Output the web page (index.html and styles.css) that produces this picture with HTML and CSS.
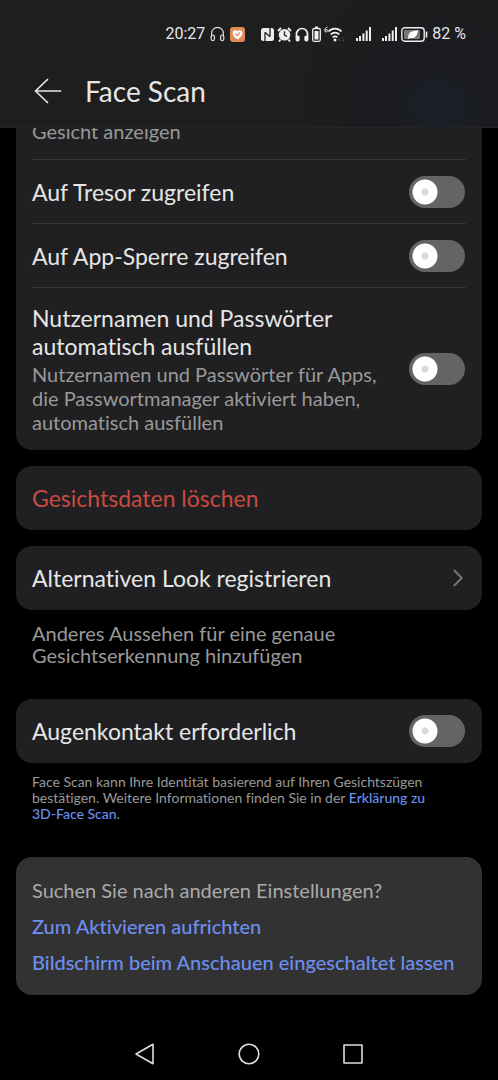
FILE: index.html
```html
<!DOCTYPE html>
<html lang="de">
<head>
<meta charset="utf-8">
<meta name="viewport" content="width=device-width, initial-scale=1">
<title>Face Scan</title>
<link rel="stylesheet" href="styles.css">
</head>
<body>
<header class="top">
  <div class="status">
    <div class="status-group status-left">
      <span class="clock">20:27</span>
      <svg width="15" height="16" viewBox="0 0 15 16" fill="none" stroke="#dcdcdc" stroke-width="1.2"><path d="M1.6 11V7.3a5.9 5.9 0 0 1 11.8 0V11"/><rect x="1.2" y="9" width="3.2" height="5.6" rx="1.5"/><rect x="10.6" y="9" width="3.2" height="5.6" rx="1.5"/></svg>
      <svg width="15" height="15" viewBox="0 0 15 15"><rect width="15" height="15" rx="3" fill="#e08a58"/><path d="M7.5 12.6C4.5 10.4 2.6 8.7 2.6 6.1 2.6 3.2 6 2.3 7.5 4.6 9 2.3 12.4 3.2 12.4 6.1 12.4 8.7 10.5 10.4 7.5 12.6z" fill="#fff"/><path d="M5.2 6.800l2 1.900 3-3.300" fill="none" stroke="#e08a58" stroke-width="1.200"/></svg>
    </div>
    <div class="status-group">
      <svg width="13" height="13" viewBox="0 0 13 13"><rect width="13" height="13" rx="2.500" fill="#eee"/><path d="M4 13V4.500M9 0v8.500" stroke="#1e1e1f" stroke-width="1.300"/><path d="M4 4.300L9 8.700" stroke="#1e1e1f" stroke-width="1.300"/></svg>
      <svg width="15" height="15" viewBox="0 0 15 15"><circle cx="7.500" cy="7.800" r="5.800" fill="#eee"/><path d="M1 4l3-3M14 4l-3-3M3.500 12.500L2 14.500M11.500 12.500l1.500 2" stroke="#eee" stroke-width="1.900"/><path d="M7.500 4.300V8l2.600 1.500" fill="none" stroke="#1e1e1f" stroke-width="1.300"/></svg>
      <svg width="14" height="15" viewBox="0 0 14 15"><path d="M1.500 10V7a5.500 5.500 0 0 1 11 0v3" fill="none" stroke="#eee" stroke-width="1.700"/><rect x=".6" y="8.500" width="4" height="6" rx="1.700" fill="#eee"/><rect x="9.400" y="8.500" width="4" height="6" rx="1.700" fill="#eee"/></svg>
      <svg width="9" height="16" viewBox="0 0 9 16"><path d="M3 .5h3v2H3z" fill="#eee"/><rect x=".7" y="2.500" width="7.600" height="12.800" rx="1.500" fill="none" stroke="#eee" stroke-width="1.300"/><path d="M2.500 5h4v8.500h-4z" fill="#eee"/></svg>
      <svg width="21" height="16" viewBox="0 0 21 16" fill="none" stroke="#eee" stroke-width="1.800"><path d="M3.500 1C1.500 1.500.9 3 .9 4.700a1.300 1.300 0 1 0 1.300-1.300c-.8 0-1.300.6-1.300 1.300" stroke-width="1"/><path d="M4.500 5.500a8.800 8.800 0 0 1 13 0M6.700 8.500a5.900 5.900 0 0 1 8.600 0M8.800 11.300a3 3 0 0 1 4.400 0"/><circle cx="11" cy="13.900" r="1.500" fill="#eee" stroke="none"/><path d="M16.500 11.800l-1.600 1.700 1.600 1.700M18.500 11.800l1.600 1.700-1.600 1.700" stroke="#555" stroke-width="1"/></svg>
    </div>
    <svg width="15" height="14" viewBox="0 0 15 14" fill="#eee"><path d="M0 11h2v3H0zM3 9h2v5H3zM6.400 6.500h2V14h-2zM9.700 3.500h2V14h-2zM13 0h2v14h-2z"/></svg>
    <div class="status-group status-right">
      <svg width="15" height="14" viewBox="0 0 15 14" fill="#eee"><path d="M0 11h2v3H0zM3 9h2v5H3zM6.400 6.500h2V14h-2zM9.700 3.500h2V14h-2zM13 0h2v14h-2z"/></svg>
      <svg width="27" height="15" viewBox="0 0 27 15"><rect x=".8" y=".8" width="22.400" height="13.400" rx="3" fill="none" stroke="#eee" stroke-width="1.400"/><path d="M25.500 4.500v6" stroke="#eee" stroke-width="1.600"/><rect x="3" y="3" width="16" height="9" rx="1" fill="#777"/><path d="M7.300 10.700C7 5.500 10 4 17 3.300c-.6 6-3.500 8.800-7.800 7.500L7.500 12l-.8-.5c1.500-2.500 3.500-4 6-5.200-2.500.7-4 1.900-5.400 4.400z" fill="#fff"/></svg>
      <span class="clock">82 %</span>
    </div>
  </div>
  <div class="titlebar">
    <button class="back" type="button" aria-label="Zurück"><svg width="28" height="26" viewBox="0 0 28 26" fill="none" stroke="#e8e8e8" stroke-width="1.700" stroke-linecap="round" stroke-linejoin="round"><path d="M26.500 13H1.500M13.500 1.500L1.500 13l12 11.500"/></svg></button>
    <h1 class="title">Face Scan</h1>
  </div>
</header>

<main class="content">
  <section class="card card-first">
    <p class="note clipped">Gesicht anzeigen</p>
    <div class="row">
      <label class="label" for="tresor">Auf Tresor zugreifen</label>
      <input class="switch" type="checkbox" role="switch" id="tresor">
    </div>
    <div class="row">
      <label class="label" for="sperre">Auf App-Sperre zugreifen</label>
      <input class="switch" type="checkbox" role="switch" id="sperre">
    </div>
    <div class="row row-tall">
      <div class="row-text">
        <label class="label" for="fill">Nutzernamen und Passwörter automatisch ausfüllen</label>
        <p class="note">Nutzernamen und Passwörter für Apps, die Passwortmanager aktiviert haben, automatisch ausfüllen</p>
      </div>
      <input class="switch" type="checkbox" role="switch" id="fill">
    </div>
  </section>

  <button class="card action danger" type="button">Gesichtsdaten löschen</button>

  <button class="card action" type="button">Alternativen Look registrieren
    <svg width="10" height="18" viewBox="0 0 10 18" fill="none" stroke="#777" stroke-width="1.900" stroke-linecap="round" stroke-linejoin="round"><path d="M1.300 1.500L8.700 9l-7.400 7.500"/></svg>
  </button>
  <p class="caption">Anderes Aussehen für eine genaue Gesichtserkennung hinzufügen</p>

  <section class="card">
    <div class="row">
      <label class="label" for="augen">Augenkontakt erforderlich</label>
      <input class="switch" type="checkbox" role="switch" id="augen">
    </div>
  </section>
  <p class="legal">Face Scan kann Ihre Identität basierend auf Ihren Gesichtszügen bestätigen. Weitere Informationen finden Sie in der <a class="link" href="#info">Erklärung zu 3D-Face Scan</a>.</p>

  <section class="card related">
    <p class="related-title">Suchen Sie nach anderen Einstellungen?</p>
    <a class="link" href="#wake">Zum Aktivieren aufrichten</a>
    <a class="link" href="#display">Bildschirm beim Anschauen eingeschaltet lassen</a>
  </section>
</main>

<nav class="nav">
  <button class="nav-button" type="button" aria-label="Zurück"><svg width="22" height="22" viewBox="0 0 22 22" fill="none" stroke="#ddd" stroke-width="1.600" stroke-linejoin="round"><path d="M19 1.300v19.400L2 11z"/></svg></button>
  <button class="nav-button" type="button" aria-label="Startbildschirm"><svg width="22" height="22" viewBox="0 0 22 22" fill="none" stroke="#ddd" stroke-width="1.600"><circle cx="11" cy="11" r="9.800"/></svg></button>
  <button class="nav-button" type="button" aria-label="Letzte Apps"><svg width="22" height="22" viewBox="0 0 22 22" fill="none" stroke="#ddd" stroke-width="1.600" stroke-linejoin="round"><rect x="2" y="2" width="18" height="18"/></svg></button>
</nav>
</body>
</html>
```
FILE: styles.css
```css
* {
  box-sizing: border-box;
}

body {
  margin: 0;
  min-height: 100vh;
  display: flex;
  flex-direction: column;
  background: #000;
  color: #e6e6e6;
  font-family: Lato, "Noto Sans", sans-serif;
  font-variant-ligatures: none;
}

h1,
p {
  margin: 0;
  font-weight: 400;
}

button {
  border: 0;
  padding: 0;
  background: none;
  color: inherit;
  font: inherit;
}

svg {
  display: block;
  flex: none;
}

.top {
  position: sticky;
  top: 0;
  z-index: 1;
  height: 128px;
  padding-top: 22px;
  background: radial-gradient(circle at 88% 85%, #1c1f29, #1b1c20 60px, #1e1e1e 150px);
  border-bottom: 1px solid #242425;
}

.status {
  display: flex;
  align-items: center;
  justify-content: flex-end;
  gap: 11px;
  height: 24px;
  padding-right: 32px;
}

.status-group {
  display: flex;
  align-items: center;
  gap: 3px;
}

.status-left {
  gap: 5px;
  margin-right: 5px;
}

.status-right {
  gap: 4px;
}

.clock {
  font-family: Roboto, sans-serif;
  font-size: 16px;
  line-height: 24px;
}

.titlebar {
  display: flex;
  align-items: center;
  gap: 23px;
  padding: 24px 34px 0;
}

.title {
  font-size: 28px;
  line-height: 42px;
}

.content {
  flex: 1;
  padding: 0 16px;
}

.card {
  display: block;
  width: 100%;
  margin-bottom: 16px;
  padding: 0 16px;
  border-radius: 16px;
  background: #202022;
}

.card-first {
  margin-top: -16px;
  padding-top: 7px;
}

.clipped {
  padding-bottom: 16px;
}

.row {
  display: flex;
  align-items: center;
  justify-content: space-between;
  gap: 16px;
  min-height: 64px;
}

.card-first .row {
  border-top: 1px solid #353537;
}

.row-tall {
  padding: 16px 0;
}

.row-text {
  max-width: 360px;
}

.label,
.action {
  font-size: 23px;
  line-height: 28px;
}

.row-text .label {
  display: block;
  max-width: 320px;
  margin-bottom: 2px;
}

.note,
.caption {
  color: #999;
  font-size: 20px;
  line-height: 24px;
}

.caption {
  line-height: 22px;
  max-width: 370px;
  margin: -4px 16px 33px;
}

.switch {
  appearance: none;
  flex: none;
  width: 56px;
  height: 32px;
  margin: 0 1px 0 0;
  border-radius: 16px;
  background: radial-gradient(circle at 16px 16px, #dadada 0 3px, #fff 4px 12px, #646464 13px);
}

.switch:checked {
  background: radial-gradient(circle at 40px 16px, #fff 0 12px, #3f7cf0 13px);
}

.action {
  display: flex;
  align-items: center;
  justify-content: space-between;
  min-height: 64px;
  padding-right: 19px;
  text-align: left;
}

.danger {
  color: #c94a40;
}

.legal {
  margin: -5px 16px 35px;
  color: #999;
  font-size: 14px;
  line-height: 16px;
  max-width: 410px;
}

.link {
  color: #6c8ff0;
  font-weight: 500;
  text-decoration: none;
}

.related {
  display: flex;
  flex-direction: column;
  align-items: flex-start;
  gap: 12px;
  padding: 21px 16px;
  background: #323232;
  font-size: 20px;
  line-height: 24px;
}

.related-title {
  color: #aaa;
}

.nav {
  display: flex;
  justify-content: center;
  gap: 82px;
  padding-bottom: 15px;
}

.nav-button {
  display: flex;
  align-items: center;
  height: 22px;
}
```
